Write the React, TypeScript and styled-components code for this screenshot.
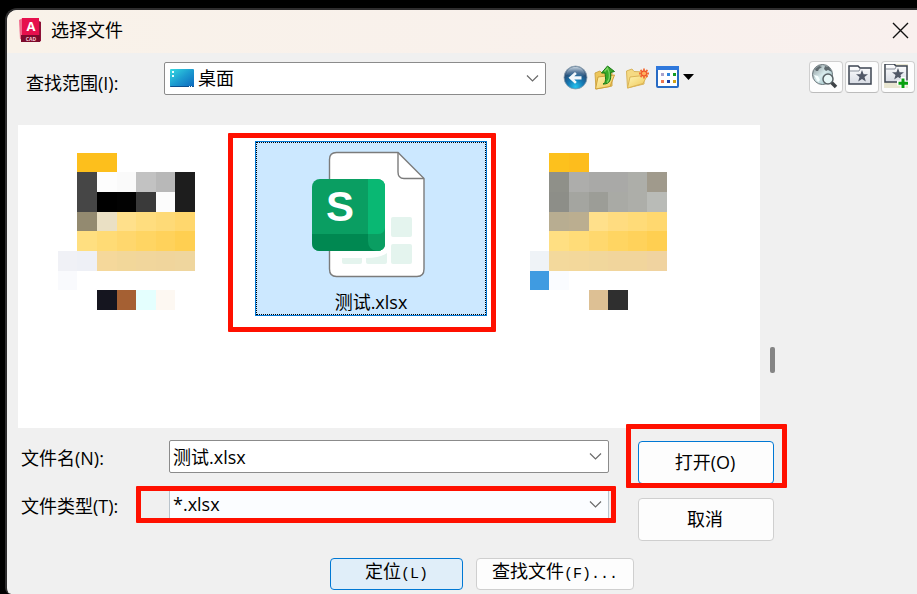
import React, { useState } from "react";
import styled, { createGlobalStyle, css } from "styled-components";

const GlobalStyle = createGlobalStyle`
  *, *::before, *::after { box-sizing: border-box; }
  body {
    margin: 0;
    background: #000;
    color: #000;
    font: 18px/24px "Open Sans", "Noto Sans CJK SC", sans-serif;
  }
  button, input, select { font: inherit; color: inherit; margin: 0; }
  svg { display: block; flex: none; }
`;

const Desktop = styled.main`
  display: flex;
  min-height: 100vh;
  padding: 8px 0 0 5px;
`;

const Dialog = styled.section`
  display: flex;
  flex: 1;
  flex-direction: column;
  min-width: 0;
  border: solid #2e2d2e;
  border-width: 2px 0 0 2px;
  border-radius: 12px 0 0 6px;
  background: #f0f0f0;
  overflow: hidden;
`;

const TitleBar = styled.header`
  display: flex;
  align-items: center;
  gap: 9px;
  height: 43px;
  padding: 0 8px 3px 12px;
  background: linear-gradient(90deg, #f9f2e9, #f9f0ee);
`;

const Title = styled.h1`
  flex: 1;
  margin: 0;
  font-size: 18px;
  font-weight: 400;
`;

const PlainButton = styled.button`
  display: flex;
  align-items: center;
  padding: 0;
  border: 0;
  background: none;
`;

const LookInBar = styled.div`
  display: flex;
  align-items: flex-start;
  height: 72px;
  padding: 8px 2px 0 19px;
`;

const LookInLabel = styled.label`
  width: 138px;
  padding-top: 10px;
`;

const Tools = styled.div`
  display: flex;
  align-items: center;
  gap: 6px;
  height: 32px;
  margin: 0 113px 0 17px;
`;

const Places = styled.div`
  display: flex;
  gap: 2px;
`;

const PlaceButton = styled.button`
  display: flex;
  width: 34px;
  height: 32px;
  padding: 2px;
  border: 1px solid #cfcfcf;
  border-bottom-color: #bcbcbc;
  border-radius: 4px;
  background: #fdfdfd;
`;

const Combo = styled.div`
  position: relative;
  display: flex;
  flex: 1;
  min-width: 0;
`;

const LookInCombo = styled(Combo)`
  margin-top: 1px;
`;

const fieldStyle = css`
  width: 100%;
  height: 33px;
  border: 1px solid #8b8b8b;
  border-radius: 2px;
  background: #fff;
  outline: 0;
  appearance: none;
`;

const Select = styled.select<{ $icon?: boolean }>`
  ${fieldStyle}
  padding: 0 28px 2px ${(p) => (p.$icon ? 33 : 3)}px;
  ${(p) => !p.$icon && "background: #fbfdff; border-color: #b9c3cb;"}
`;

const TextInput = styled.input`
  ${fieldStyle}
  padding: 0 28px 2px 3px;
`;

const ComboIcon = styled.span`
  position: absolute;
  top: 7px;
  left: 6px;
  pointer-events: none;
`;

const ComboArrow = styled.span`
  position: absolute;
  top: 12px;
  right: 7px;
  pointer-events: none;
`;

const Marker = styled.span<{ $inset: string }>`
  position: absolute;
  inset: ${(p) => p.$inset};
  border: 5px solid #ff1000;
  border-radius: 1px;
  pointer-events: none;
`;

const Browser = styled.div`
  display: flex;
  padding-left: 11px;
`;

const FileList = styled.ul`
  display: grid;
  flex: 1;
  grid-template-columns: repeat(auto-fill, 232px);
  align-content: start;
  gap: 4px;
  min-height: 303px;
  margin: 0;
  padding: 16px 0 0 1px;
  background: #fff;
  list-style: none;
`;

const FileItem = styled.li`
  position: relative;
`;

const FileTile = styled.button<{ $selected?: boolean }>`
  display: flex;
  flex-direction: column;
  align-items: center;
  width: 100%;
  height: 175px;
  padding: ${(p) => (p.$selected ? 9 : 11)}px 0 0;
  border: 1px solid transparent;
  background: none;
  ${(p) =>
    p.$selected &&
    css`
      border-color: #0078d7;
      background: #cce8ff;
      outline: 1px dotted #000;
      outline-offset: -2px;
    `}
`;

const FileName = styled.span`
  margin-top: 11px;
`;

const ScrollArea = styled.div`
  width: 157px;
  padding: 222px 0 0 10px;
`;

const ScrollThumb = styled.div`
  width: 5px;
  height: 26px;
  border-radius: 2px;
  background: #858585;
`;

const Form = styled.form`
  display: flex;
  gap: 29px;
  padding: 12px 143px 0 14px;
`;

const Fields = styled.div`
  display: flex;
  flex: 1;
  flex-direction: column;
  gap: 15px;
`;

const Field = styled.div`
  display: flex;
  align-items: center;
`;

const FieldLabel = styled.label`
  width: 148px;
  padding-top: 2px;
`;

const Actions = styled.div`
  display: flex;
  flex-direction: column;
  gap: 14px;
  width: 136px;
  padding-top: 1px;
`;

const ActionWrap = styled.div`
  position: relative;
  display: flex;
`;

const Button = styled.button<{ $primary?: boolean }>`
  flex: 1;
  height: 43px;
  padding: 0 2px 2px 0;
  border: 1px solid ${(p) => (p.$primary ? "#0078d4" : "#cfcfcf")};
  border-radius: 4px;
  background: #fdfdfd;
`;

const Footer = styled.div`
  display: flex;
  gap: 13px;
  padding: 17px 0 4px 323px;
`;

const FooterButton = styled.button<{ $wide?: boolean; $active?: boolean }>`
  width: ${(p) => (p.$wide ? 158 : 133)}px;
  height: 32px;
  padding: 0 0 2px;
  border: 1px solid ${(p) => (p.$active ? "#0078d4" : "#cfcfcf")};
  border-radius: 4px;
  background: ${(p) => (p.$active ? "#e0eef9" : "#fdfdfd")};
`;

const Mono = styled.span`
  font: 15px/24px "Liberation Mono", monospace;
`;

const AppIcon = () => (
  <svg width="23" height="26" viewBox="0 0 23 26" aria-hidden="true">
    <path d="M0 3 4 1V23L1 22Z" fill="#ef6a8c" />
    <path d="M3 1H20V18H3Z" fill="#e6104d" />
    <path d="M20 4 22 5V24L20 25Z" fill="#8e1238" />
    <path d="M2 18H21V25H2Z" fill="#7d0a2c" />
    <text x="12" y="14" textAnchor="middle" fontFamily="Open Sans" fontSize="13" fontWeight="700" fill="#fff">A</text>
    <text x="12" y="24" textAnchor="middle" fontFamily="Open Sans" fontSize="5" fontWeight="700" fill="#f5cbd7">CAD</text>
  </svg>
);

const CloseIcon = () => (
  <svg width="17" height="17" viewBox="0 0 17 17" fill="none" stroke="#111" strokeWidth="1.4" aria-hidden="true">
    <path d="M1 1 16 16M16 1 1 16" />
  </svg>
);

const Chevron = () => (
  <ComboArrow>
    <svg width="13" height="9" viewBox="0 0 13 9" fill="none" stroke="#6a6a6a" strokeWidth="1.2" aria-hidden="true">
      <path d="M1 1.5 6.5 7 12 1.5" />
    </svg>
  </ComboArrow>
);

const DesktopIcon = () => (
  <svg width="24" height="18" viewBox="0 0 24 18" aria-hidden="true">
    <defs>
      <linearGradient id="desk" x1="0" y1="0" x2="1" y2="1">
        <stop offset="0" stopColor="#35dbe2" />
        <stop offset="0.5" stopColor="#1c9bd0" />
        <stop offset="1" stopColor="#0b66bd" />
      </linearGradient>
    </defs>
    <rect width="24" height="18" rx="1" fill="url(#desk)" />
    <path d="M0 17H24V17Q24 18 23 18H1Q0 18 0 17Z" fill="#0a4f8e" />
    <path d="M2 2h2v2H2zM2 6h2v2H2zM19 17h1v1h-1zM21 17h1v1h-1z" fill="#e9fbff" />
  </svg>
);

const BackIcon = () => (
  <svg width="25" height="25" viewBox="0 0 25 25" aria-hidden="true">
    <defs>
      <radialGradient id="back" cx="0.5" cy="0.9" r="0.85">
        <stop offset="0" stopColor="#25c3ee" />
        <stop offset="0.4" stopColor="#1479b4" />
        <stop offset="0.75" stopColor="#274f78" />
        <stop offset="1" stopColor="#6c859d" />
      </radialGradient>
      <linearGradient id="gloss" x1="0" y1="0" x2="0" y2="1">
        <stop offset="0" stopColor="#dce6ef" stopOpacity="0.75" />
        <stop offset="1" stopColor="#7193b4" stopOpacity="0.15" />
      </linearGradient>
    </defs>
    <circle cx="12.5" cy="12.5" r="11.5" fill="url(#back)" stroke="#8ba0b0" strokeWidth="0.8" />
    <path d="M3 10C4 4 8 2 12.5 2S21 4 22 10C17 13 8 9 3 10Z" fill="url(#gloss)" />
    <path d="M5.5 12.8 12 7 13.8 9 11.3 11.3H18.5V14.6H11.3L13.8 17 12 18.8Z" fill="#f3f8fb" />
  </svg>
);

const FolderGradient = ({ id }: { id: string }) => (
  <linearGradient id={id} x1="0" y1="0" x2="1" y2="1">
    <stop offset="0" stopColor="#fff6b6" />
    <stop offset="1" stopColor="#eec552" />
  </linearGradient>
);

const UpIcon = () => (
  <svg width="25" height="25" viewBox="0 0 25 25" aria-hidden="true">
    <defs><FolderGradient id="folder-up" /></defs>
    <path d="M1 8 6 6 8 8 17 6 18 8V21L2 24Z" fill="#edc65a" stroke="#cfa849" />
    <path d="M4 12 20.500 10 16 21.500 1.500 24Z" fill="url(#folder-up)" stroke="#d0a13b" />
    <path d="M9 19C12.500 18 11.500 12 11 8H7.500L13.500 1 20.500 6.500 16.500 7.500C17.500 14 16 19.500 9 19Z" fill="#38a928" stroke="#187917" />
    <path d="M10.500 6.500 13.500 3 15 7C16 12 15.500 15 13 17.500" fill="none" stroke="#7ed365" strokeWidth="1.2" />
  </svg>
);

const NewFolderIcon = () => (
  <svg width="25" height="25" viewBox="0 0 25 25" aria-hidden="true">
    <defs><FolderGradient id="folder-new" /></defs>
    <path d="M1.500 6 7 4 9 6.500 19 7 19 19 2.500 23Z" fill="#f5da83" stroke="#d8b45c" />
    <path d="M5 12 22.500 10 18 18.500 2.500 23Z" fill="url(#folder-new)" stroke="#dcb456" />
    <g stroke="#f36d35" strokeWidth="1.8">
      <path d="M19 3.500V13.500M14 8.500H24M15.500 5 22.500 12M22.500 5 15.500 12" />
    </g>
    <circle cx="19" cy="8.500" r="2.500" fill="#ffb05c" stroke="#ed4b24" />
  </svg>
);

const ViewIcon = () => (
  <svg width="40" height="25" viewBox="0 0 40 25" aria-hidden="true">
    <rect x="1" y="2" width="21" height="20" rx="1" fill="#fff" stroke="#286bc4" strokeWidth="2" />
    <path d="M0 1H23V5H0Z" fill="#2f78dc" />
    <path d="M5 8h3v3H5z" fill="#a7a1cb" />
    <path d="M11 8h3v3h-3z" fill="#2f86dd" />
    <path d="M17 8h3v3h-3z" fill="#149c22" />
    <path d="M5 15h3v3H5z" fill="#f07650" />
    <path d="M11 15h3v3h-3z" fill="#1e42a6" />
    <path d="M17 15h3v3h-3z" fill="#d2a316" />
    <path d="M27 9H38L32.500 15Z" fill="#000" />
  </svg>
);

const GlobeIcon = () => (
  <svg width="28" height="26" viewBox="0 0 28 26" aria-hidden="true">
    <defs>
      <linearGradient id="globe" x1="0" y1="0" x2="1" y2="1">
        <stop offset="0" stopColor="#879295" />
        <stop offset="0.5" stopColor="#d7eaec" />
        <stop offset="1" stopColor="#8eb6bb" />
      </linearGradient>
    </defs>
    <circle cx="10.5" cy="10.5" r="10" fill="url(#globe)" stroke="#657176" />
    <path d="M3 5 7 2 10 3 7 5 6 7 4 7ZM13 2 17 3 20 8 16 6 14 7 12 5Z" fill="#5f6a6f" />
    <path d="M2 11 6 12 8 16 6 18Z" fill="#f6ffff" />
    <path d="m19 18 5 5" stroke="#3f4347" strokeWidth="3.5" />
    <circle cx="16" cy="15" r="5" fill="#e8f7f7" stroke="#596266" strokeWidth="1.5" />
  </svg>
);

const StarFolder = ({ add = false }: { add?: boolean }) => (
  <svg width="28" height="26" viewBox="0 0 28 26" aria-hidden="true">
    <defs>
      <linearGradient id="silver" x1="0" y1="0" x2="0" y2="1">
        <stop offset="0" stopColor="#fff" />
        <stop offset="1" stopColor="#d8dce4" />
      </linearGradient>
    </defs>
    {add && <path d="M0 0H24V24H0Z" fill="#e9e6d1" />}
    <g transform={add ? "translate(0 -1)" : "translate(0 1)"}>
      <path d="M1 19V1H10L12 3H23V19Z" fill="url(#silver)" stroke="#3d4451" strokeWidth="1.5" />
      <path d="M2 6H11L12 4" fill="none" stroke="#8c929d" />
      <path d="m14 5 1.600 4.200h4.400l-3.500 2.800 1.300 4.500L14 14l-3.800 2.500 1.300-4.500L8 9.200h4.400Z" fill="#515867" />
    </g>
    {add && <path d="M19 13V24M13 19H24" stroke="#fff" strokeWidth="5" />}
    {add && <path d="M19 14.500V24M14.500 19.300H24" stroke="#08a010" strokeWidth="3" />}
  </svg>
);

const SheetIcon = () => (
  <svg width="118" height="128" viewBox="0 0 118 128" aria-hidden="true">
    <path d="M24.500 1.500H86L112 27.500V118Q112 125.500 105 125.500H24.500Q17.500 125.500 17.500 118V8.500Q17.500 1.500 24.500 1.500Z" fill="#fff" stroke="#7b7b7b" strokeWidth="1.4" />
    <path d="M86 1.500V21Q86 27.500 92 27.500H112" fill="none" stroke="#7b7b7b" strokeWidth="1.4" />
    <g fill="#e4f4ee">
      <rect x="79" y="66" width="21" height="20" rx="2" />
      <rect x="79" y="93" width="21" height="20" rx="2" />
      <path d="M30 107H50V111Q50 113 48 113H32Q30 113 30 111Z" />
      <path d="M54 107Q68 107 75 102V111Q75 113 73 113H56Q54 113 54 111Z" />
    </g>
    <rect y="28" width="73" height="72" rx="8" fill="#0a9e62" />
    <path d="M56 28H65Q73 28 73 36V92H56Z" fill="#09b873" />
    <path d="M0 83H66Q73 83 73 90V92Q73 100 65 100H8Q0 100 0 92Z" fill="#008851" />
    <path d="M56 83H66Q72 83 73 77V92Q73 100 65 100Q56 99 56 90Z" fill="#0a9e62" />
    <text x="28" y="70" textAnchor="middle" fontFamily="Liberation Sans" fontSize="42" fontWeight="700" fill="#fff">S</text>
  </svg>
);

const colEdges = [0, 19, 39, 59, 78, 98, 117, 137];
const rowEdges = [0, 19, 39, 59, 78, 98, 118, 137, 157];

const projectThumb = [
  ["", "#fdbf1c", "#fdbf1c"],
  ["", "#464646", "#fdfdfd", "#fafafa", "#c2c2c2", "#b8b8b8", "#1d1d1d"],
  ["", "#464646", "#000", "#020202", "#3a3a3a", "#fcfcfc", "#1d1d1d"],
  ["", "#938a70", "#eae0c4", "#ffe08b", "#ffdd7e", "#feda77", "#ffd76d"],
  ["", "#ffdf80", "#ffdb75", "#ffd76d", "#ffd563", "#ffd25b", "#ffcf51"],
  ["#f0f1f6", "#eef0f6", "#f5d89b", "#f2d79a", "#f1d69c", "#f0d59c", "#efd69e"],
  ["#f9fafd"],
  ["", "", "#15151f", "#a56033", "#e4fffe", "#fdf8f2"],
];

const archiveThumb = [
  ["", "#fdc11d", "#fdbd1d"],
  ["", "#8f9089", "#adadab", "#a9a9a7", "#a9a9a7", "#adaea9", "#a09a8c"],
  ["", "#8d8e88", "#a4a5a0", "#9c9d97", "#a9aaa5", "#adaea9", "#b9bbb7"],
  ["", "#b8ad91", "#bbae90", "#ffe08b", "#ffdc80", "#ffdb78", "#ffd86f"],
  ["", "#ffdf82", "#ffdc78", "#ffd86e", "#ffd562", "#ffd25b", "#ffcf51"],
  ["#eff3f7", "#f3d99c", "#f3d89b", "#f1d79c", "#f1d59c", "#f1d59c", "#f0d3a0"],
  ["#3f9be1", "#fafcff"],
  ["", "", "", "#ddc094", "#2f2f2f"],
];

const Thumb = ({ cells }: { cells: string[][] }) => (
  <svg width="154" height="157" viewBox="0 0 154 157" shapeRendering="crispEdges" aria-hidden="true">
    {cells.map((row, r) =>
      row.map((fill, c) =>
        fill ? (
          <rect
            key={`${r}-${c}`}
            x={colEdges[c]}
            y={rowEdges[r]}
            width={colEdges[c + 1] - colEdges[c]}
            height={rowEdges[r + 1] - rowEdges[r]}
            fill={fill}
          />
        ) : null
      )
    )}
  </svg>
);

export default function App() {
  const [fileName, setFileName] = useState("测试.xlsx");

  return (
    <>
      <GlobalStyle />
      <Desktop>
        <Dialog role="dialog" aria-labelledby="dialog-title">
          <TitleBar>
            <AppIcon />
            <Title id="dialog-title">选择文件</Title>
            <PlainButton type="button" aria-label="关闭"><CloseIcon /></PlainButton>
          </TitleBar>

          <LookInBar>
            <LookInLabel htmlFor="look-in">查找范围(I):</LookInLabel>
            <LookInCombo>
              <Select id="look-in" $icon><option>桌面</option></Select>
              <ComboIcon><DesktopIcon /></ComboIcon>
              <Chevron />
            </LookInCombo>
            <Tools>
              <PlainButton type="button" aria-label="后退"><BackIcon /></PlainButton>
              <PlainButton type="button" aria-label="向上一级"><UpIcon /></PlainButton>
              <PlainButton type="button" aria-label="新建文件夹"><NewFolderIcon /></PlainButton>
              <PlainButton type="button" aria-label="视图"><ViewIcon /></PlainButton>
            </Tools>
            <Places>
              <PlaceButton type="button" aria-label="搜索网络"><GlobeIcon /></PlaceButton>
              <PlaceButton type="button" aria-label="收藏夹"><StarFolder /></PlaceButton>
              <PlaceButton type="button" aria-label="添加到收藏夹"><StarFolder add /></PlaceButton>
            </Places>
          </LookInBar>

          <Browser>
            <FileList>
              <FileItem>
                <FileTile type="button" aria-label="文件夹 1"><Thumb cells={projectThumb} /></FileTile>
              </FileItem>
              <FileItem>
                <FileTile type="button" $selected>
                  <SheetIcon />
                  <FileName>测试.xlsx</FileName>
                </FileTile>
                <Marker $inset="-8px -9px -16px -27px" />
              </FileItem>
              <FileItem>
                <FileTile type="button" aria-label="文件夹 2"><Thumb cells={archiveThumb} /></FileTile>
              </FileItem>
            </FileList>
            <ScrollArea><ScrollThumb /></ScrollArea>
          </Browser>

          <Form onSubmit={(e) => e.preventDefault()}>
            <Fields>
              <Field>
                <FieldLabel htmlFor="file-name">文件名(N):</FieldLabel>
                <Combo>
                  <TextInput id="file-name" value={fileName} onChange={(e) => setFileName(e.target.value)} />
                  <Chevron />
                </Combo>
              </Field>
              <Field>
                <FieldLabel htmlFor="file-type">文件类型(T):</FieldLabel>
                <Combo>
                  <Select id="file-type"><option>*.xlsx</option></Select>
                  <Chevron />
                  <Marker $inset="-2px -7px -2px -33px" />
                </Combo>
              </Field>
            </Fields>
            <Actions>
              <ActionWrap>
                <Button type="submit" $primary>打开(O)</Button>
                <Marker $inset="-17px -13px -4px -12px" />
              </ActionWrap>
              <ActionWrap>
                <Button type="button">取消</Button>
              </ActionWrap>
            </Actions>
          </Form>

          <Footer>
            <FooterButton type="button" $active>定位<Mono>(L)</Mono></FooterButton>
            <FooterButton type="button" $wide>查找文件<Mono>(F)...</Mono></FooterButton>
          </Footer>
        </Dialog>
      </Desktop>
    </>
  );
}
